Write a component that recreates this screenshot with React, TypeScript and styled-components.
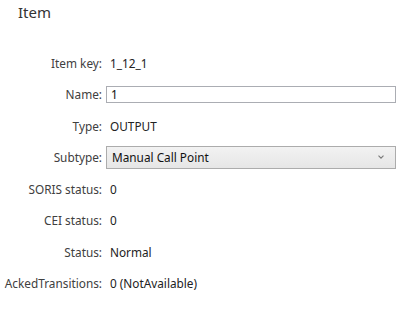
import { Fragment, type ReactElement } from 'react';
import styled, { createGlobalStyle } from 'styled-components';

const GlobalStyle = createGlobalStyle`
  html, body {
    margin: 0;
    padding: 0;
    background: #ffffff;
  }
  body {
    font-family: 'Noto Sans', 'Open Sans', sans-serif;
    color: #222222;
  }
`;

const Page = styled.div`
  width: 410px;
  height: 311px;
  overflow: hidden;
`;

const Title = styled.div`
  padding: 2px 0 0 18px;
  height: 40px;
  box-sizing: border-box;
  font-size: 15px;
  color: #333333;
`;

const Form = styled.div`
  display: grid;
  grid-template-columns: 102px 290px;
  grid-auto-rows: 31.5px;
  column-gap: 4px;
  margin-top: 7px;
  align-items: center;
`;

const Label = styled.div`
  text-align: right;
  font-size: 11.8px;
  color: #404040;
  white-space: nowrap;
`;

const Value = styled.div`
  font-size: 11.8px;
  color: #222222;
  padding-left: 4px;
  white-space: nowrap;
`;

const TextBox = styled.div`
  height: 17px;
  box-sizing: border-box;
  border: 1px solid #abadb3;
  background: #ffffff;
  font-size: 11.8px;
  line-height: 15px;
  padding-left: 4px;
  color: #111111;
`;

const Combo = styled.div`
  height: 23px;
  box-sizing: border-box;
  border: 1px solid #acacac;
  background: linear-gradient(#f2f2f2, #e6e6e6);
  display: flex;
  align-items: center;
  justify-content: space-between;
  padding: 0 11px 0 5px;
  font-size: 11.8px;
  color: #111111;
`;

const Chevron = () => (
  <svg width="6" height="4" viewBox="0 0 6 4">
    <path d="M0.5 0.7 L3 3.2 L5.5 0.7" fill="none" stroke="#7a7a7a" strokeWidth="1.1" />
  </svg>
);

const rows: [string, string][] = [
  ['SORIS status:', '0'],
  ['CEI status:', '0'],
  ['Status:', 'Normal'],
  ['AckedTransitions:', '0 (NotAvailable)'],
];

function App(): ReactElement {
  return (
    <Page>
      <GlobalStyle />
      <Title>Item</Title>
      <Form>
        <Label>Item key:</Label>
        <Value>1_12_1</Value>
        <Label>Name:</Label>
        <TextBox>1</TextBox>
        <Label>Type:</Label>
        <Value>OUTPUT</Value>
        <Label>Subtype:</Label>
        <Combo>
          <span>Manual Call Point</span>
          <Chevron />
        </Combo>
        {rows.map(([label, value]) => (
          <Fragment key={label}>
            <Label>{label}</Label>
            <Value>{value}</Value>
          </Fragment>
        ))}
      </Form>
    </Page>
  );
}

export default App;
